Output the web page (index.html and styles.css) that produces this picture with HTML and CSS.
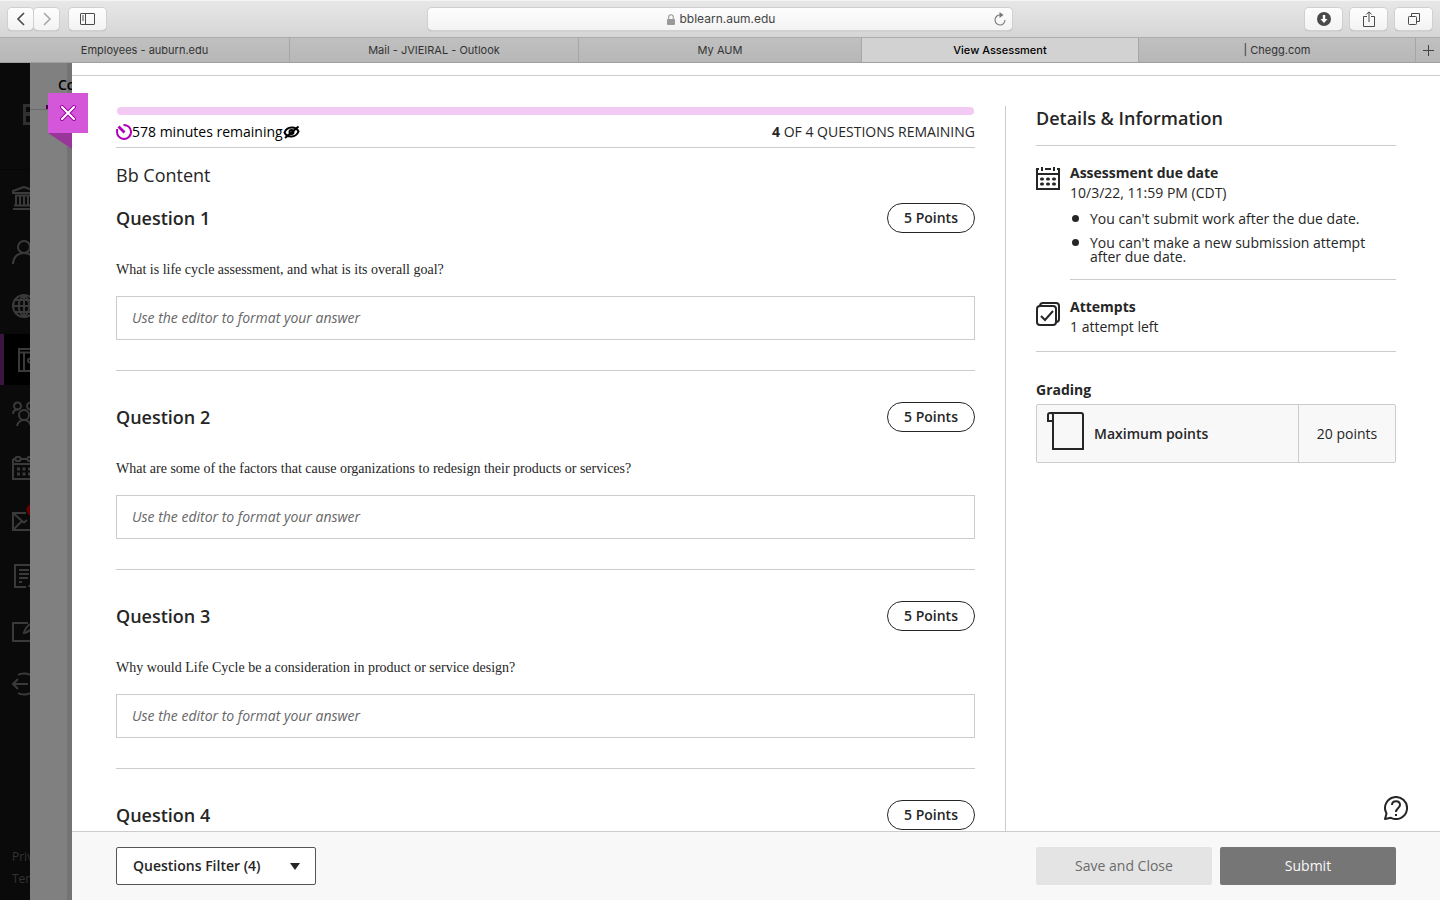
FILE: index.html
```html
<!DOCTYPE html>
<html lang="en">
<head>
  <meta charset="UTF-8" />
  <meta name="viewport" content="width=device-width, initial-scale=1" />
  <title>View Assessment</title>
  <link rel="stylesheet" href="styles.css">
</head>
<body>
  <header class="browser">
    <div class="toolbar">
      <div class="tools">
        <div class="nav-pair">
          <button class="tool-btn small" aria-label="Back">
            <svg width="10" height="14" viewBox="0 0 10 14" fill="none" stroke="#4a4a4a" stroke-width="1.6"><path d="M8 1 2 7l6 6"/></svg>
          </button>
          <button class="tool-btn small" aria-label="Forward">
            <svg width="10" height="14" viewBox="0 0 10 14" fill="none" stroke="#a8a8a8" stroke-width="1.6"><path d="m2 1 6 6-6 6"/></svg>
          </button>
        </div>
        <button class="tool-btn" aria-label="Show sidebar">
          <svg width="15" height="12" viewBox="0 0 15 12" fill="none" stroke="#4a4a4a"><rect x=".5" y=".5" width="14" height="11" rx=".5"/><path d="M5.500 0v12M2 3h2M2 5h2M2 7h2"/></svg>
        </button>
      </div>
      <div class="address">
        <span class="address-text">
          <svg width="8" height="11" viewBox="0 0 8 11"><rect y="5" width="8" height="6" rx="1" fill="#999"/><path d="M1.700 5.500V3a2.300 2.300 0 0 1 4.600 0v2.500" fill="none" stroke="#999" stroke-width="1.100"/></svg>
          <input class="url" type="text" value="bblearn.aum.edu" aria-label="Address">
        </span>
        <button class="reload" aria-label="Reload">
          <svg width="12" height="14" viewBox="0 0 12 14"><path d="M6.300 3A5 5 0 1 0 11 8" fill="none" stroke="#777" stroke-width="1.100"/><path d="M5.500 0 9.500 3 5.500 6z" fill="#777"/></svg>
        </button>
      </div>
      <div class="tools end">
        <button class="tool-btn" aria-label="Downloads">
          <svg width="14" height="14" viewBox="0 0 14 14"><circle cx="7" cy="7" r="7" fill="#4a4a4a"/><path d="M5.800 3h2.400v4h2.300L7 11 3.500 7h2.300z" fill="#fff"/></svg>
        </button>
        <button class="tool-btn" aria-label="Share">
          <svg width="12" height="16" viewBox="0 0 12 16" fill="none" stroke="#4a4a4a"><path d="M4 5.500H.5v10h11v-10H8M6 11V1M3.300 3.500 6 .8l2.700 2.700"/></svg>
        </button>
        <button class="tool-btn" aria-label="Show all tabs">
          <svg width="12" height="12" viewBox="0 0 12 12" fill="none" stroke="#4a4a4a"><rect x=".5" y="3.500" width="8" height="8" rx=".8"/><path d="M3.500 3.500v-3h8v8h-3"/></svg>
        </button>
      </div>
    </div>
    <nav class="tabs">
      <a class="tab" href="#">Employees - auburn.edu</a>
      <a class="tab" href="#">Mail - JVIEIRAL - Outlook</a>
      <a class="tab" href="#">My AUM</a>
      <a class="tab active" href="#">View Assessment</a>
      <a class="tab" href="#">| Chegg.com</a>
      <button class="tab new-tab" aria-label="New tab">
        <svg width="11" height="11" viewBox="0 0 11 11" stroke="#444"><path d="M5.500 0v11M0 5.500h11"/></svg>
      </button>
    </nav>
  </header>

  <div class="app">
    <aside class="sidebar">
      <div class="brand">
        <svg width="24" height="21" viewBox="0 0 24 21"><path d="M0 0h24v21H0zM3 3v5h21V3zm0 9v6h21v-6z" fill="#303030" fill-rule="evenodd"/></svg>
      </div>
      <nav class="side-nav">
        <a href="#" aria-label="Institution">
          <svg viewBox="0 0 24 24"><path d="M12 1 1 5v2h22V5zM3 9.500h18M4 9.500v9M8 9.500v9M12 9.500v9M16 9.500v9M20 9.500v9M2 19.500h20M1 23h22"/></svg>
        </a>
        <a href="#" aria-label="Profile">
          <svg viewBox="0 0 24 24"><circle cx="12" cy="7" r="6"/><path d="M1 24c0-6 4-11 11-11s11 5 11 11"/></svg>
        </a>
        <a href="#" aria-label="Activity">
          <svg viewBox="0 0 24 24"><circle cx="12" cy="12" r="11"/><path d="M12 1v22M1 12h22M3 6h18M3 18h18M12 1C5 7 5 17 12 23M12 1c7 6 7 16 0 22"/></svg>
        </a>
        <a class="current" href="#" aria-label="Courses">
          <svg viewBox="0 0 24 24"><path d="M1 1h22v22H1zM1 4.500h22M6 4.500V23M12 10.500h11M12 10.500a2 2 0 0 0 0 4h11"/></svg>
        </a>
        <a href="#" aria-label="Organizations">
          <svg viewBox="0 0 24 24"><circle cx="5.500" cy="4" r="3.500"/><circle cx="18.500" cy="4" r="3.500"/><circle cx="12" cy="13" r="5"/><path d="M1 12c0-3 2-4.500 5-4.500M23 12c0-3-2-4.500-5-4.500M5 24c1-4 4-6 7-6s6 2 7 6"/></svg>
        </a>
        <a href="#" aria-label="Calendar">
          <svg viewBox="0 0 24 24"><path d="M1 3v20h22V3M1 3h2M9 3h6M1 8h22"/><rect x="3.500" y="1" width="5" height="4" rx="1.500"/><rect x="15.500" y="1" width="5" height="4" rx="1.500"/><path d="M5 13h3M10.500 13h3M16 13h3M5 18h3M10.500 18h3M16 18h3" stroke-width="3"/></svg>
        </a>
        <a href="#" aria-label="Messages">
          <svg viewBox="0 0 24 24"><path d="M14 3H1v17h22V11M1 3l9 8 2 1.500 3-2.500M1 20l9-9"/><circle cx="21" cy="0" r="6.500" fill="#600" stroke="none"/></svg>
        </a>
        <a href="#" aria-label="Grades">
          <svg viewBox="0 0 24 24"><path d="M14 23H3V1h18v14M7 6h10M7 10h10M7 14h9M7 18h3M17 23l1-2"/></svg>
        </a>
        <a href="#" aria-label="Tools">
          <svg viewBox="0 0 24 24"><path d="M16 5H1v18h22V13M12 15c1-5 5-9 10-11l1 3c-3 3-5 7-11 8z"/></svg>
        </a>
        <a href="#" aria-label="Sign out">
          <svg viewBox="0 0 24 24"><path d="M16 12H1M6 7l-5 5 5 5M6 3c3-2 9-2 12 0M6 21c3 2 9 2 12 0"/></svg>
        </a>
      </nav>
      <div class="legal">
        <a href="#">Privacy</a>
        <a href="#">Terms</a>
      </div>
    </aside>

    <div class="backdrop">
      <div class="course-head">Content</div>
    </div>

    <section class="panel">
      <button class="close" aria-label="Close">
        <svg width="18" height="18" viewBox="0 0 18 18" stroke-linecap="round"><path d="m3 3 12 12M15 3 3 15" stroke="#a000a8" stroke-width="4"/><path d="m3 3 12 12M15 3 3 15" stroke="#fff" stroke-width="2"/></svg>
      </button>
      <div class="panel-top"></div>

      <div class="panel-body">
        <main class="assessment">
          <div class="progress"></div>
          <div class="status">
            <span class="timer">
              <svg width="16" height="16" viewBox="0 0 16 16" fill="none" stroke="#b100b8" stroke-width="2"><path d="M7.500 1a7 7 0 1 1-6.400 6V5"/><path d="M2.500 2.500 8.500 8.500" stroke-width="2.800"/></svg>
              578 minutes remaining
              <svg width="17" height="14" viewBox="0 0 17 14" fill="none" stroke="#000" stroke-width="2"><path d="M1.500 7.500C4 1 13 1 15.500 6.500 13 13 4 13 1.500 7.500z"/><circle cx="8.500" cy="7" r="2"/><path d="M2 13 15.500 1.500" stroke-width="2"/></svg>
            </span>
            <span><b>4</b> OF 4 QUESTIONS REMAINING</span>
          </div>
          <h1>Bb Content</h1>

          <section class="question">
            <div class="question-head"><h2>Question 1</h2><span class="points">5 Points</span></div>
            <label for="answer1">What is life cycle assessment, and what is its overall goal?</label>
            <input type="text" id="answer1" placeholder="Use the editor to format your answer">
          </section>
          <section class="question">
            <div class="question-head"><h2>Question 2</h2><span class="points">5 Points</span></div>
            <label for="answer2">What are some of the factors that cause organizations to redesign their products or services?</label>
            <input type="text" id="answer2" placeholder="Use the editor to format your answer">
          </section>
          <section class="question">
            <div class="question-head"><h2>Question 3</h2><span class="points">5 Points</span></div>
            <label for="answer3">Why would Life Cycle be a consideration in product or service design?</label>
            <input type="text" id="answer3" placeholder="Use the editor to format your answer">
          </section>
          <section class="question">
            <div class="question-head"><h2>Question 4</h2><span class="points">5 Points</span></div>
          </section>
        </main>

        <aside class="details">
          <h2>Details &amp; Information</h2>
          <div class="detail">
            <svg width="24" height="24" viewBox="0 0 24 24" fill="none" stroke="#262626" stroke-width="2"><path d="M3 2H1v20h22V2h-2M9 2h6M1 7h22M6 0v4M18 0v4"/><path d="M5.500 12h1M11.500 12h1M17.500 12h1M5.500 17h1M11.500 17h1M17.500 17h1" stroke-width="3" stroke-linecap="round"/></svg>
            <div class="detail-text lined">
              <h3>Assessment due date</h3>
              <p>10/3/22, 11:59 PM (CDT)</p>
              <ul>
                <li>You can't submit work after the due date.</li>
                <li>You can't make a new submission attempt after due date.</li>
              </ul>
            </div>
          </div>
          <div class="detail last">
            <svg width="24" height="25" viewBox="0 0 24 25" fill="none" stroke="#262626" stroke-width="2"><rect x="1" y="5" width="19" height="19" rx="3"/><path d="M4 5c0-2 1-3 3-3h13c2 0 3 1 3 3v13c0 2-1 3-3 3M5 15l4 4 8-9"/></svg>
            <div class="detail-text">
              <h3>Attempts</h3>
              <p>1 attempt left</p>
            </div>
          </div>
          <h3 class="grading-title">Grading</h3>
          <table class="grading">
            <tr>
              <th scope="row">
                <div class="max">
                  <svg width="37" height="38" viewBox="0 0 37 38" fill="none" stroke="#262626" stroke-width="2"><path d="M6 9V37h30V3c0-1-1-2-2-2H3C2 1 1 2 1 3v6h5V3c0-1-1-2-2-2"/></svg>
                  Maximum points
                </div>
              </th>
              <td>20 points</td>
            </tr>
          </table>
        </aside>
        <button class="help" aria-label="Help">
          <svg width="24" height="24" viewBox="0 0 24 24" fill="none" stroke="#262626" stroke-width="2"><path d="M2.500 17.500A11 11 0 1 1 7 21.800L1 23z" stroke-linejoin="round"/><path d="M8 9c0-5 8-5 8 0 0 3-4 3-4 7M12 18v2"/></svg>
        </button>
      </div>

      <footer class="actions">
        <div class="filter">
          <select aria-label="Questions Filter">
            <option>Questions Filter (4)</option>
          </select>
          <svg width="10" height="7" viewBox="0 0 10 7"><path d="M0 0h10L5 7z" fill="#262626"/></svg>
        </div>
        <div class="buttons">
          <button class="btn">Save and Close</button>
          <button class="btn primary">Submit</button>
        </div>
      </footer>
    </section>
  </div>
</body>
</html>
```
FILE: styles.css
```css
* {
  box-sizing: border-box;
}
body {
  margin: 0;
  height: 100vh;
  display: flex;
  flex-direction: column;
  overflow: hidden;
  font: 14px/20px "Open Sans", sans-serif;
  color: #262626;
}
h1, h2, h3, p, ul {
  margin: 0;
  padding: 0;
}
button, input, select {
  font: inherit;
  color: inherit;
  margin: 0;
  padding: 0;
}
svg {
  display: block;
  flex: none;
}

/* browser window */
.browser {
  font-family: Inter, sans-serif;
}
.toolbar {
  display: grid;
  grid-template-columns: 1fr 584px 1fr;
  align-items: center;
  height: 38px;
  padding: 0 8px;
  background: linear-gradient(#e7e7e7, #d5d5d5);
  border-top: 1px solid #f4f4f4;
  border-bottom: 1px solid #acacac;
}
.tools {
  display: flex;
  gap: 8px;
}
.tools.end {
  justify-content: flex-end;
}
.nav-pair {
  display: flex;
  gap: 1px;
  margin-right: 2px;
}
.tool-btn {
  display: flex;
  align-items: center;
  justify-content: center;
  width: 37px;
  height: 22px;
  border: 0;
  border-radius: 4px;
  background: linear-gradient(#fefefe, #f3f3f3);
  box-shadow: 0 0 0 1px #d0d0d0, 0 1px 1px #999;
}
.tool-btn.small {
  width: 25px;
}
.address {
  display: flex;
  align-items: center;
  height: 22px;
  padding: 0 6px 0 20px;
  border-radius: 4px;
  background: linear-gradient(#fdfdfd, #f3f3f3);
  box-shadow: 0 0 0 1px #d0d0d0, 0 1px 1px #999;
}
.address-text {
  flex: 1;
  display: flex;
  align-items: center;
  justify-content: center;
  gap: 5px;
}
.url {
  width: 96px;
  border: 0;
  background: none;
  font-size: 12px;
  color: #444;
}
.reload {
  border: 0;
  background: none;
}
.tabs {
  display: grid;
  grid-template-columns: 290fr 289fr 283fr 277fr 277fr 24px;
  height: 25px;
  background: linear-gradient(#c0c0c0, #b7b7b7);
  border-bottom: 1px solid #a0a0a0;
}
.tab {
  display: flex;
  align-items: center;
  justify-content: center;
  border: 0;
  border-right: 1px solid #a6a6a6;
  background: none;
  color: #333;
  font-size: 11px;
  text-decoration: none;
}
.tab.active {
  background: #d2d2d2;
  color: #000;
  font-weight: 500;
}
.new-tab {
  border-right: 0;
}

.app {
  flex: 1;
  display: flex;
  min-height: 0;
}

/* dimmed page behind the panel */
.sidebar {
  width: 30px;
  overflow: hidden;
  display: flex;
  flex-direction: column;
  background: #0a0a0a;
}
.brand {
  height: 107px;
  margin-bottom: 2px;
  padding: 41px 0 0 23px;
  border-bottom: 1px solid #060606;
}
.side-nav {
  display: flex;
  flex-direction: column;
  gap: 3px;
}
.side-nav a {
  display: flex;
  align-items: center;
  width: 200px;
  height: 51px;
  padding-left: 12px;
}
.side-nav a.current {
  border-left: 4px solid #3a1540;
  padding-left: 14px;
  background: #000;
}
.side-nav svg {
  width: 24px;
  height: 24px;
  overflow: visible;
  fill: none;
  stroke: #3a3a3a;
  stroke-width: 2;
}
.legal {
  display: flex;
  flex-direction: column;
  gap: 2px;
  margin-top: auto;
  padding: 0 0 11px 12px;
}
.legal a {
  color: #333;
  font-size: 12px;
  text-decoration: none;
}
.backdrop {
  width: 42px;
  overflow: hidden;
  background: linear-gradient(to left, #737373 5px, #808080 5px);
}
.course-head {
  position: relative;
  height: 47px;
  padding: 12px 0 0 28px;
  border-bottom: 1px solid #6c6c6c;
  color: #000;
  font-weight: 600;
}
/* selected course tab */
.course-head::after {
  content: "";
  position: absolute;
  left: 16px;
  bottom: 0;
  width: 26px;
  height: 4px;
  background: #4b0050;
}

/* assessment panel */
.panel {
  flex: 1;
  min-width: 0;
  position: relative;
  display: flex;
  flex-direction: column;
  background: #fff;
}
.panel-top {
  height: 13px;
  border-bottom: 1px solid #ccc;
}
.close {
  position: absolute;
  top: 30px;
  left: -24px;
  width: 40px;
  height: 40px;
  display: flex;
  align-items: center;
  justify-content: center;
  border: 0;
  background: #d457da;
}
.close::after {
  content: "";
  position: absolute;
  top: 40px;
  left: 0;
  width: 24px;
  height: 16px;
  background: #983799;
  clip-path: polygon(0 0, 100% 0, 100% 100%);
}
.panel-body {
  flex: 1;
  min-height: 0;
  position: relative;
  display: flex;
  padding-top: 30px;
}
.assessment {
  flex: 1;
  min-width: 0;
  padding: 1px 30px 0 44px;
  overflow-y: auto;
  scrollbar-width: none;
}
.progress {
  height: 8px;
  margin: 0 1px;
  border-radius: 4px;
  background: #f3caf3;
}
.status {
  display: flex;
  justify-content: space-between;
  padding: 7px 0 5px;
  border-bottom: 1px solid #ccc;
}
.timer {
  display: flex;
  align-items: center;
  color: #000;
}
h1 {
  margin: 15px 0 16px;
  font-size: 18px;
  line-height: 24px;
  font-weight: 400;
}
h2 {
  font-size: 18px;
  line-height: 24px;
  font-weight: 600;
}
h3 {
  font-size: 14px;
  line-height: 20px;
  font-weight: 700;
}
.question {
  padding-bottom: 30px;
  margin-bottom: 31px;
  border-bottom: 1px solid #ccc;
}
.question-head {
  display: flex;
  align-items: center;
  justify-content: space-between;
  margin-bottom: 27px;
}
.points {
  width: 88px;
  height: 30px;
  line-height: 28px;
  border: 1px solid #262626;
  border-radius: 15px;
  text-align: center;
  font-weight: 600;
}
.question label {
  display: block;
  margin-bottom: 16px;
  font-family: "Liberation Serif", serif;
}
.question input {
  display: block;
  width: 100%;
  height: 44px;
  padding: 0 15px 2px;
  border: 1px solid #ccc;
}
.question input::placeholder {
  color: #666;
  font-style: italic;
  opacity: 1;
}

/* details column */
.details {
  width: 435px;
  padding: 0 44px 0 30px;
  border-left: 1px solid #ccc;
}
.details h2 {
  padding-bottom: 15px;
  border-bottom: 1px solid #ccc;
}
.detail {
  display: flex;
  gap: 10px;
  padding-top: 17px;
}
.detail svg {
  margin-top: 4px;
}
.detail-text {
  flex: 1;
}
.detail-text.lined {
  padding-bottom: 15px;
  border-bottom: 1px solid #ccc;
}
.detail.last {
  padding-bottom: 14px;
  border-bottom: 1px solid #ccc;
}
.detail ul {
  display: grid;
  gap: 10px;
  margin-top: 9px;
  list-style: none;
}
.detail li {
  display: flex;
  gap: 11px;
  padding-left: 2px;
  line-height: 14px;
}
.detail li::before {
  content: "";
  flex: none;
  width: 7px;
  height: 7px;
  margin-top: 3px;
  border-radius: 50%;
  background: #262626;
}
.grading-title {
  margin: 28px 0 4px;
}
.grading {
  width: 100%;
  height: 59px;
  border: 1px solid #ccc;
  border-radius: 2px;
  border-spacing: 0;
  background: #f8f8f8;
}
.grading th {
  padding: 0 10px;
  font-weight: 600;
}
.grading td {
  width: 97px;
  padding: 0;
  border-left: 1px solid #ccc;
  text-align: center;
}
.max {
  display: flex;
  align-items: center;
  gap: 10px;
}
.max svg {
  margin-bottom: 6px;
}
.help {
  position: absolute;
  right: 32px;
  bottom: 11px;
  border: 0;
  background: none;
}

.actions {
  display: flex;
  align-items: center;
  justify-content: space-between;
  height: 69px;
  padding: 0 44px;
  border-top: 1px solid #ccc;
  background: #f8f8f8;
}
.filter {
  display: grid;
  align-items: center;
  width: 200px;
}
.filter select,
.filter svg {
  grid-area: 1 / 1;
}
.filter select {
  height: 38px;
  padding: 0 16px;
  border: 1px solid #555;
  border-radius: 2px;
  background: #fff;
  font-weight: 600;
  appearance: none;
}
.filter svg {
  justify-self: end;
  margin-right: 16px;
  pointer-events: none;
}
.buttons {
  display: flex;
  gap: 8px;
}
.btn {
  width: 176px;
  height: 38px;
  border: 0;
  border-radius: 2px;
  background: #e4e4e4;
  color: #6b6b6b;
}
.btn.primary {
  background: #767676;
  color: #f8f8f8;
}
```
